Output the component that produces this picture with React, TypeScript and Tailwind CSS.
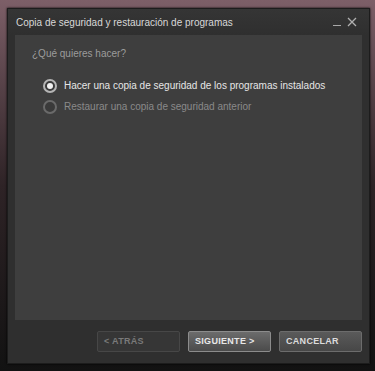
const font = { fontFamily: '"Liberation Sans", Arial, sans-serif' }

function Radio({ checked, label }: { checked?: boolean; label: string }) {
  return (
    <div className="flex items-center gap-[7px] h-[21px]">
      <span
        className={`flex items-center justify-center w-[14px] h-[14px] rounded-full border-2 ${
          checked ? 'border-[#b5b5b5] bg-[#3a3a3a]' : 'border-[#6a6a6a] bg-[#3a3a3a]'
        }`}
      >
        {checked && <span className="w-[6px] h-[6px] rounded-full bg-[#f2f2f2]" />}
      </span>
      <span className={`text-[10px] ${checked ? 'text-[#e6e6e6]' : 'text-[#8a8a8a]'}`}>{label}</span>
    </div>
  )
}

function Btn({ label, kind }: { label: string; kind: 'disabled' | 'primary' | 'normal' }) {
  const cls =
    kind === 'disabled'
      ? 'bg-[#363636] border-[#474747] text-[#7a7a7a]'
      : kind === 'primary'
        ? 'bg-gradient-to-b from-[#6c6c6c] to-[#4b4b4b] border-[#8c8c8c] text-[#e8e8e8]'
        : 'bg-gradient-to-b from-[#5a5a5a] to-[#474747] border-[#6c6c6c] text-[#dcdcdc]'
  return (
    <div
      className={`w-[83px] h-[21px] border rounded-[2px] flex items-center pl-[6px] text-[9px] font-bold tracking-[0.3px] ${cls}`}
    >
      {label}
    </div>
  )
}

export default function App() {
  return (
    <div
      className="w-[375px] h-[371px] pt-[8px] pl-[7px] bg-gradient-to-b from-[#7d5f68] via-[#2e2326] to-[#121212]"
      style={font}
    >
      <div className="w-[363px] h-[356px] flex flex-col bg-[#2f2f2f] border border-[#1c1c1c] shadow-[0_0_2px_#000]">
        <div className="h-[26px] flex items-center justify-between pl-[8px] pr-[12px] bg-gradient-to-b from-[#353535] to-[#2f2f2f]">
          <span className="text-[10px] text-[#d8d8d8]">Copia de seguridad y restauración de programas</span>
          <div className="flex items-end gap-[6px] text-[#b0b0b0]">
            <span className="w-[8px] h-[1.5px] bg-[#a8a8a8] mb-[1px]" />
            <svg width="10" height="10" viewBox="0 0 10 10" stroke="#b0b0b0" strokeWidth="1.3">
              <path d="M1 1 L9 9 M9 1 L1 9" />
            </svg>
          </div>
        </div>
        <div className="mx-[7px] h-[285px] bg-[#3e3e3e] pt-[11px] pl-[17px]">
          <div className="text-[10px] text-[#9c9c9c]">¿Qué quieres hacer?</div>
          <div className="mt-[14px] pl-[11px] flex flex-col">
            <Radio checked label="Hacer una copia de seguridad de los programas instalados" />
            <Radio label="Restaurar una copia de seguridad anterior" />
          </div>
        </div>
        <div className="flex justify-end gap-[8px] pr-[7px] pt-[11px]">
          <Btn kind="disabled" label="< ATRÁS" />
          <Btn kind="primary" label="SIGUIENTE >" />
          <Btn kind="normal" label="CANCELAR" />
        </div>
      </div>
    </div>
  )
}
